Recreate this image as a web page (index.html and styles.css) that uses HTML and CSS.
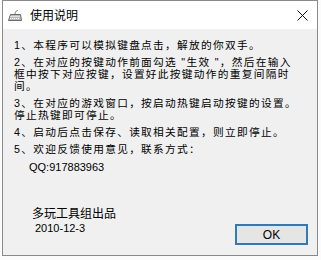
FILE: index.html
```html
<!DOCTYPE html>
<html lang="zh-CN">
<head>
    <meta charset="UTF-8">
    <title>使用说明</title>
    <link rel="stylesheet" href="styles.css">
</head>
<body>
    <div class="ventana">
        <div class="titulo">
            <svg class="icono" width="14" height="11" viewBox="0 0 14 11">
                <path d="M7 4 C7 1 9 1 10 0" fill="none" stroke="#777" stroke-width="1"/>
                <path d="M2.5 4.5 H12.5 L13.5 10.5 H0.5 Z" fill="#bdbdbd" stroke="#6a6a6a" stroke-width="1"/>
                <path d="M2.5 6.5 H11.5 M2 8.5 H12" stroke="#fff" stroke-width="1" stroke-dasharray="1 1"/>
            </svg>
            <span class="titulo-texto">使用说明</span>
            <svg class="cerrar" width="11" height="11" viewBox="0 0 11 11">
                <path d="M0.5 0.5 L10.5 10.5 M10.5 0.5 L0.5 10.5" stroke="#111" stroke-width="1"/>
            </svg>
        </div>
        <div class="contenido">
            <p class="nota">1、本程序可以模拟键盘点击，解放的你双手。</p>
            <p class="nota">2、在对应的按键动作前面勾选 "生效 "，然后在输入<br>框中按下对应按键，设置好此按键动作的重复间隔时<br>间。</p>
            <p class="nota">3、在对应的游戏窗口，按启动热键启动按键的设置。<br>停止热键即可停止。</p>
            <p class="nota">4、启动后点击保存、读取相关配置，则立即停止。</p>
            <p class="nota">5、欢迎反馈使用意见，联系方式：</p>
            <p class="qq">QQ:917883963</p>
            <div class="pie">
                <div class="firma">
                    <div class="autor">多玩工具组出品</div>
                    <div class="fecha">2010-12-3</div>
                </div>
                <button class="boton">OK</button>
            </div>
        </div>
    </div>
</body>
</html>
```

FILE: styles.css
```css
html, body {
    margin: 0;
    padding: 0;
    background-color: #fbfbfb;
}

body {
    font-family: "Noto Sans CJK SC", sans-serif;
    font-size: 12px;
    color: #000;
}

.ventana {
    margin-left: 2px;
    width: 314px;
    height: 254px;
    border: 1px solid #8a8a8a;
    background-color: #f0f0f0;
    display: flex;
    flex-direction: column;
}

.titulo {
    height: 28px;
    background-color: #fff;
    display: flex;
    align-items: center;
    padding-left: 5px;
    padding-right: 9px;
}

.icono {
    margin-top: 1px;
}

.titulo-texto {
    margin-left: 8px;
    line-height: 14px;
}

.cerrar {
    margin-left: auto;
}

.contenido {
    flex: 1;
    display: flex;
    flex-direction: column;
    padding: 10px 9px 10px 11px;
}

.nota {
    margin: 0 0 5px 0;
    font-family: "Liberation Sans", "Noto Sans CJK SC", sans-serif;
    font-size: 10.7px;
    letter-spacing: 1.3px;
    line-height: 12px;
    white-space: nowrap;
}

.qq {
    margin: 1px 0 0 15px;
    font-family: "Liberation Sans", sans-serif;
    font-size: 11px;
    line-height: 12px;
}

.pie {
    margin-top: auto;
    display: flex;
    justify-content: space-between;
    align-items: flex-end;
}

.firma {
    margin-left: 18px;
    margin-bottom: 11px;
}

.autor {
    line-height: 14px;
}

.fecha {
    margin-left: 3px;
    margin-top: 2px;
    font-family: "Liberation Sans", sans-serif;
    font-size: 11px;
    line-height: 12px;
}

.boton {
    width: 73px;
    height: 21px;
    padding: 0;
    border: 2px solid #3a78ab;
    background-color: #e5e5e5;
    box-shadow: inset 0 0 0 1px #d6eaf8;
    font-family: "Liberation Sans", sans-serif;
    font-size: 12px;
    color: #000;
}
```
